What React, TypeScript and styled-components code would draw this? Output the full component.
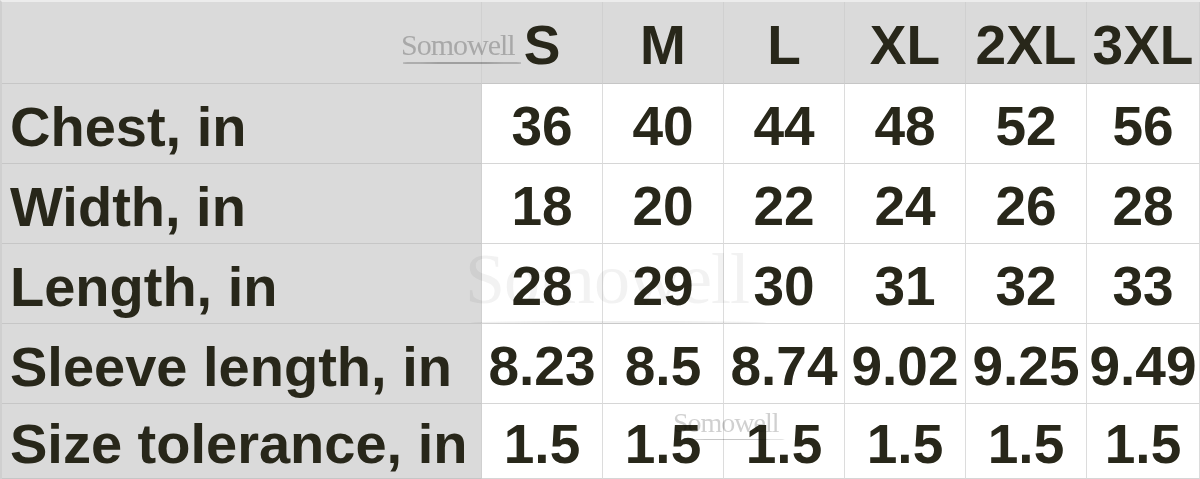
import React from 'react';
import styled, { createGlobalStyle } from 'styled-components';

const GlobalStyle = createGlobalStyle`
  html, body {
    margin: 0;
    padding: 0;
    background: #ffffff;
  }
`;

const Page = styled.div`
  position: relative;
  width: 1200px;
  height: 479px;
  overflow: hidden;
  background: #ffffff;
  font-family: "Liberation Sans", Arial, sans-serif;
`;

const Table = styled.div`
  display: grid;
  grid-template-columns: 480px repeat(5, 121px) 1fr;
  grid-template-rows: 82px repeat(4, 80px) 1fr;
  height: 100%;
  border-top: 2px solid #ececec;
  border-left: 2px solid #cfcfcf;
  box-sizing: border-box;
`;

const Cell = styled.div<{ $head?: boolean; $label?: boolean }>`
  display: flex;
  align-items: center;
  justify-content: ${(p) => (p.$label ? 'flex-start' : 'center')};
  padding: ${(p) => (p.$label ? '6px 0 0 8px' : '6px 0 0 0')};
  box-sizing: border-box;
  background: ${(p) => (p.$head || p.$label ? '#dadada' : '#ffffff')};
  border-right: 1px solid ${(p) => (p.$head || p.$label ? '#d0d0d0' : '#dcdcdc')};
  border-bottom: 1px solid ${(p) => (p.$head || p.$label ? '#c6c6c6' : '#d6d6d6')};
  color: #28271a;
  font-weight: 700;
  font-size: ${(p) => (p.$label ? 56 : 55)}px;
  line-height: 1;
  white-space: nowrap;
  overflow: hidden;
`;

const Mark = styled.div<{ $size: number; $alpha: number }>`
  position: absolute;
  font-family: "Liberation Serif", "Times New Roman", serif;
  font-size: ${(p) => p.$size}px;
  color: rgba(150, 150, 150, ${(p) => p.$alpha});
  line-height: 1;
  pointer-events: none;
  letter-spacing: -1px;
  mix-blend-mode: multiply;

  &::after {
    content: '';
    position: absolute;
    left: 2%;
    right: -6%;
    bottom: -${(p) => p.$size * 0.12}px;
    height: ${(p) => Math.max(1, p.$size / 25)}px;
    border-radius: 50%;
    background: rgba(130, 130, 130, ${(p) => p.$alpha});
  }
`;

const sizes = ['S', 'M', 'L', 'XL', '2XL', '3XL'];

const rows: { label: string; values: string[] }[] = [
  { label: 'Chest, in', values: ['36', '40', '44', '48', '52', '56'] },
  { label: 'Width, in', values: ['18', '20', '22', '24', '26', '28'] },
  { label: 'Length, in', values: ['28', '29', '30', '31', '32', '33'] },
  { label: 'Sleeve length, in', values: ['8.23', '8.5', '8.74', '9.02', '9.25', '9.49'] },
  { label: 'Size tolerance, in', values: ['1.5', '1.5', '1.5', '1.5', '1.5', '1.5'] },
];

export default function App() {
  return (
    <Page>
      <GlobalStyle />
      <Table>
        <Cell $head />
        {sizes.map((s) => (
          <Cell $head key={s}>{s}</Cell>
        ))}
        {rows.map((row) => (
          <React.Fragment key={row.label}>
            <Cell $label>{row.label}</Cell>
            {row.values.map((v, i) => (
              <Cell key={i}>{v}</Cell>
            ))}
          </React.Fragment>
        ))}
      </Table>
      <Mark $size={30} $alpha={0.55} style={{ left: 401, top: 30 }}>Somowell</Mark>
      <Mark $size={72} $alpha={0.12} style={{ left: 465, top: 243 }}>Somowell</Mark>
      <Mark $size={28} $alpha={0.45} style={{ left: 673, top: 409 }}>Somowell</Mark>
    </Page>
  );
}
